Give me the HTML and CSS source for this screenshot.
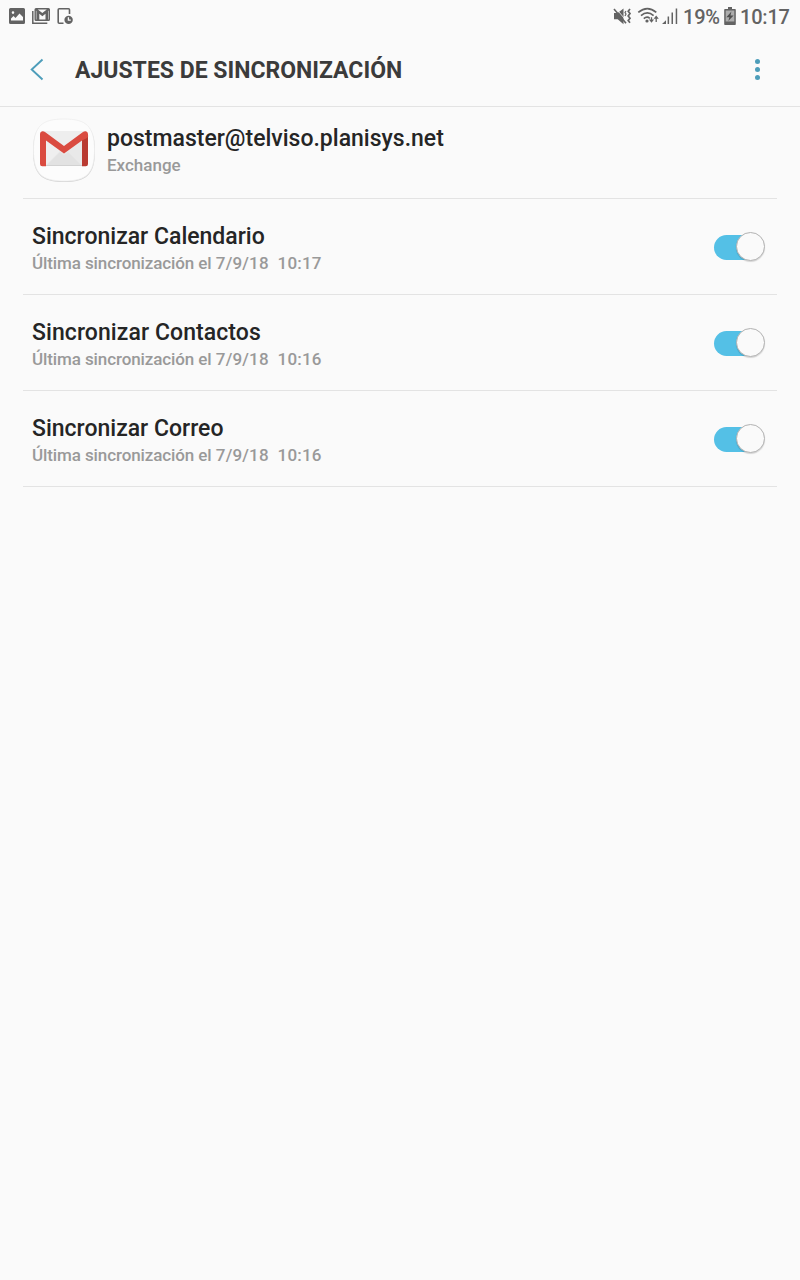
FILE: index.html
```html
<!DOCTYPE html>
<html lang="es">
<head>
    <meta charset="UTF-8">
    <meta name="viewport" content="width=device-width, initial-scale=1.0">
    <title>Ajustes de sincronización</title>
    <link rel="stylesheet" href="styles.css">
</head>

<body>

    <div class="statusbar">
        <svg class="status-left" width="80" height="32" viewBox="0 0 80 32">
            <!-- image -->
            <path fill="#636363" fill-rule="evenodd" d="M10.500 8h13a1.500 1.500 0 0 1 1.500 1.500v13a1.500 1.500 0 0 1-1.500 1.500h-13a1.500 1.500 0 0 1-1.500-1.500v-13a1.500 1.500 0 0 1 1.500-1.500zM11 20.500h12v-3.500l-3.500-3.500-4 4.500-2-2-2.500 2.500zM13 11.300a1.300 1.300 0 1 0 0 2.600 1.300 1.300 0 0 0 0-2.600z"/>
            <!-- gmail -->
            <path fill="none" stroke="#636363" stroke-width="1.500" d="M32.800 11v12.200h14.500"/>
            <path fill="#636363" fill-rule="evenodd" d="M36 8h12.500a1.500 1.500 0 0 1 1.500 1.500v10a1.500 1.500 0 0 1-1.500 1.500H36a1.500 1.500 0 0 1-1.500-1.500v-10A1.500 1.500 0 0 1 36 8zM37.800 9.400l4.500 3.700 4.500-3.700zM39.300 13.700v5.700h6.200v-5.700l-3.100 2.500zM35.900 10.500v8.900h.5v-8.500zM48.700 10.500v8.900h-.5v-8.500z"/>
            <!-- device with clock -->
            <path fill="none" stroke="#636363" stroke-width="1.600" d="M63.500 23.200h-4.300a1 1 0 0 1-1-1V9.700a1 1 0 0 1 1-1h9.300a1 1 0 0 1 1 1v4.300"/>
            <circle cx="68.600" cy="19.900" r="4.200" fill="#636363"/>
            <path fill="none" stroke="#fafafa" stroke-width="1.300" d="M68.400 17.300v2.900h2.400"/>
        </svg>
        <div class="status-right">
            <svg width="73" height="32" viewBox="0 0 73 32">
                <!-- muted / vibrate -->
                <path fill="#636363" d="M4 13h3.700l5.800-4.400v15.600l-5.800-4.900H4z"/>
                <path stroke="#fafafa" stroke-width=".8" d="M6 8.500l11 13"/>
                <path stroke="#636363" stroke-width="1.600" d="M4 9l12 14.300"/>
                <path fill="none" stroke="#636363" stroke-width="1.200" d="M16 11l-1 1.500 1 1.500-1 2"/>
                <path fill="none" stroke="#636363" stroke-width="1.700" d="M20 9l-1.800 2.300 1.800 2.300-1.800 2.300 1.800 2.300-1.800 2.300 1.800 2.300"/>
                <!-- wifi -->
                <path fill="none" stroke="#636363" stroke-width="1.700" d="M28.300 12.400q9-7.600 18 0M31 15.600q6.300-5.400 12.600 0M33.800 18.700q3-2.700 6-.4"/>
                <circle cx="37" cy="21" r="1.600" fill="#636363"/>
                <path stroke="#636363" stroke-width="1.300" d="M41.500 17.300v3.200M46.200 18v4"/>
                <path fill="#636363" d="M38.900 19.500h5.200l-2.600 3.200zM43.600 18.700h5.200l-2.600-3.200z"/>
                <!-- signal -->
                <path fill="#636363" d="M52 24l4-3.800V24zM57.600 16.500h1.500V24h-1.500zM61.500 12.500H63V24h-1.500zM65.700 8.500h1.500V24h-1.500z"/>
            </svg>
            <span class="battery-text">19%</span>
            <svg class="battery" width="12" height="32" viewBox="0 0 12 32">
                <path fill="#636363" d="M4 7h4v2h3a.8.8 0 0 1 .8.8v14.400a.8.8 0 0 1-.8.8H1a.8.8 0 0 1-.8-.8V9.800A.8.8 0 0 1 1 9h3z"/>
                <path fill="#adadad" d="M1.700 10.500h8.600v11H1.700z"/>
                <path fill="#4f4f4f" d="M7.400 11.500l-5 5.700h3L4.300 21l5.300-5.500H6.500z"/>
            </svg>
            <span class="clock">10:17</span>
        </div>
    </div>

    <div class="header">
        <svg class="back" width="16" height="24" viewBox="0 0 16 24">
            <path fill="none" stroke="#4d9dba" stroke-width="1.900" d="M13.500 2.500L2.700 12.500l10.800 10"/>
        </svg>
        <h1>AJUSTES DE SINCRONIZACIÓN</h1>
        <svg class="more" width="8" height="24" viewBox="0 0 8 24">
            <g fill="#4d9dba">
                <circle cx="3.500" cy="4.500" r="2.500"/>
                <circle cx="3.500" cy="12.500" r="2.500"/>
                <circle cx="3.500" cy="20.500" r="2.500"/>
            </g>
        </svg>
    </div>

    <div class="list">
        <div class="account">
            <svg class="account-icon" width="64" height="66" viewBox="0 0 64 66">
                <path fill="#d2d2d2" d="M32 3C54 3 63 10 63 34S54 65 32 65 1 58 1 34 10 3 32 3z"/>
                <path fill="#fcfcfc" stroke="#ededed" stroke-width=".8" d="M32 2C54 2 62.500 9 62.500 33S54 64 32 64 1.500 57 1.500 33 10 2 32 2z"/>
                <path fill="#e9e9e9" d="M10 14h44v35H10z"/>
                <path fill="#e2e2e2" d="M14 49l14-14 4 3 4-3 14 14z"/>
                <path fill="#efefef" d="M14 21v27l14-14z"/>
                <path fill="#eeeeee" d="M11 14h42L32 31z"/>
                <path fill="#d2d2d2" d="M14 48h36v1H14z"/>
                <path fill="#b93a31" d="M50 21l6-3v29a2.300 2.300 0 0 1-2.300 2.300H50z"/>
                <path fill="#da4b40" d="M8 17.500V47a2.300 2.300 0 0 0 2.300 2.300H14V23.500l18 13 18-13 5-2.500a3 3 0 0 0 1-3.500c0-3-2.500-4-5-2.500L32 29 13 15c-2.500-1.500-5-.500-5 2.500z"/>
            </svg>
            <div class="text">
                <div class="name">postmaster@telviso.planisys.net</div>
                <div class="detail">Exchange</div>
            </div>
        </div>
        <div class="row">
            <div class="text">
                <div class="name">Sincronizar Calendario</div>
                <div class="detail"><span class="sync-label">Última sincronización el</span> <span class="sync-date">7/9/18&nbsp; 10:17</span></div>
            </div>
            <div class="switch"><div class="knob"></div></div>
        </div>
        <div class="row">
            <div class="text">
                <div class="name contacts">Sincronizar Contactos</div>
                <div class="detail"><span class="sync-label">Última sincronización el</span> <span class="sync-date">7/9/18&nbsp; 10:16</span></div>
            </div>
            <div class="switch"><div class="knob"></div></div>
        </div>
        <div class="row">
            <div class="text">
                <div class="name">Sincronizar Correo</div>
                <div class="detail"><span class="sync-label">Última sincronización el</span> <span class="sync-date">7/9/18&nbsp; 10:16</span></div>
            </div>
            <div class="switch"><div class="knob"></div></div>
        </div>
    </div>

</body>
</html>
```

FILE: styles.css
```css
* {
    box-sizing: border-box;
}

body {
    margin: 0;
    min-height: 100vh;
    background-color: #fafafa;
    color: #252525;
    font-family: Roboto, sans-serif;
}

svg {
    display: block;
    flex: none;
}

.statusbar {
    display: flex;
    justify-content: space-between;
    height: 32px;
    color: #636363;
    font-size: 20px;
    font-weight: 500;
    line-height: 34px;
}

.status-right {
    display: flex;
    padding-right: 11px;
}

.battery-text {
    width: 41px;
    letter-spacing: -0.2px;
    white-space: nowrap;
}

.clock {
    width: 49px;
    margin-left: 4px;
    letter-spacing: -0.2px;
    white-space: nowrap;
}

.header {
    display: flex;
    align-items: center;
    height: 75px;
    padding: 0 38px 0 29px;
    border-bottom: 1px solid #e3e3e3;
}

.header h1 {
    flex: 1;
    margin: 4px 0 0 30px;
    color: #3b3b3b;
    font-size: 23px;
    font-weight: 700;
    line-height: 28px;
}

.list {
    padding: 0 23px;
}

.account {
    display: flex;
    height: 92px;
    padding: 10px 9px 0;
    border-bottom: 1px solid #e3e3e3;
}

.account .text {
    margin: 8px 0 0 11px;
}

.row {
    display: flex;
    justify-content: space-between;
    height: 96px;
    padding: 24px 12px 0 9px;
    border-bottom: 1px solid #e3e3e3;
}

.name {
    font-size: 23px;
    font-weight: 500;
    line-height: 28px;
    white-space: nowrap;
}

.contacts {
    letter-spacing: 0.08px;
}

.detail {
    color: #999999;
    font-size: 17px;
    font-weight: 500;
    line-height: 24px;
    white-space: nowrap;
}

.sync-label {
    letter-spacing: -0.1px;
}

.sync-date {
    letter-spacing: 0.17px;
}

.switch {
    display: flex;
    justify-content: flex-end;
    align-items: flex-start;
    width: 51px;
    height: 25px;
    margin-top: 12px;
    border-radius: 13px;
    background: linear-gradient(to right, #54c0e6 36px, transparent 36px);
}

.knob {
    width: 29px;
    height: 29px;
    margin-top: -3px;
    border: 1px solid #b3b3b3;
    border-radius: 50%;
    background-color: #fafafa;
    box-shadow: 0 1px 1px rgba(0, 0, 0, 0.15);
}
```
